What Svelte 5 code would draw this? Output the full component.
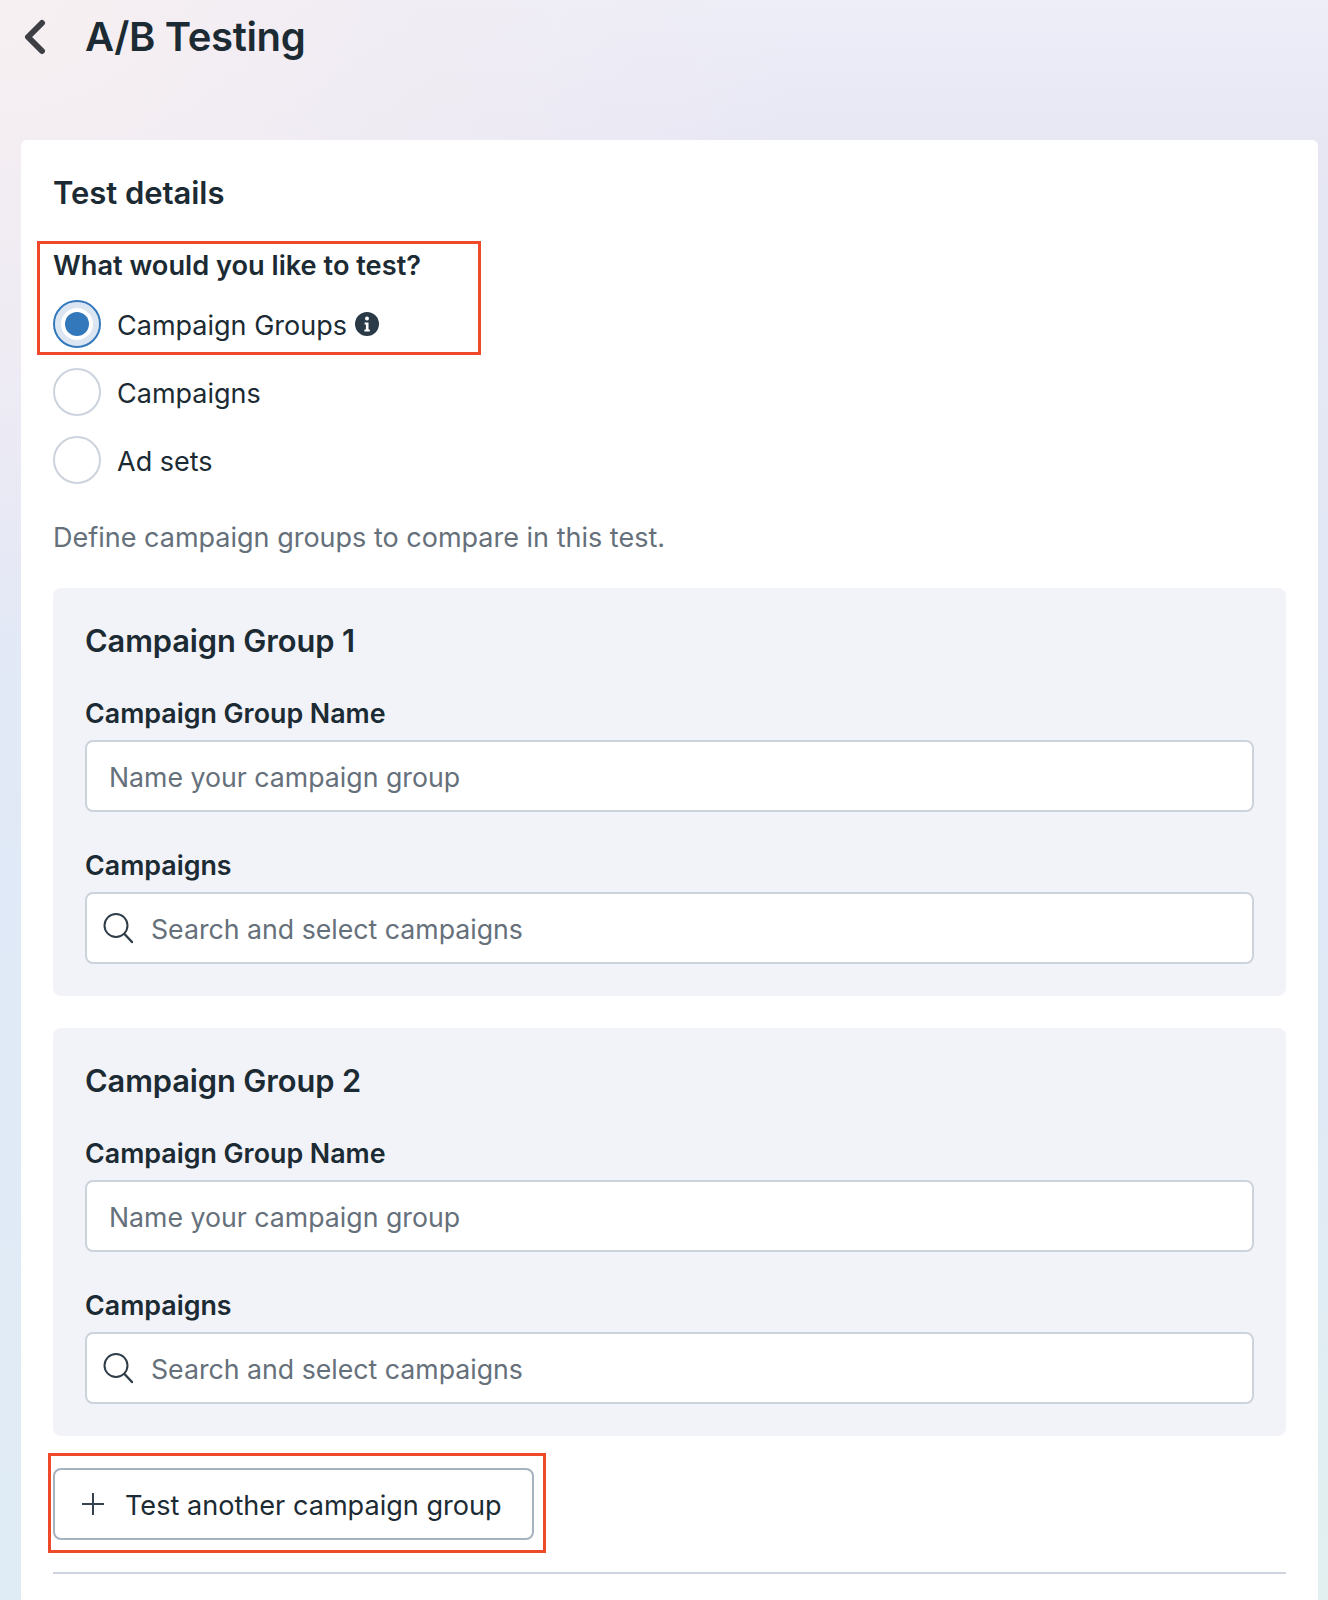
<script>
  const groups = [1, 2];
</script>

<div class="page">
  <header class="head">
    <svg class="back" width="24" height="36" viewBox="0 0 24 36" aria-hidden="true"><path d="M20 4 L6 18 L20 32" fill="none" stroke="#3d3f44" stroke-width="6" stroke-linecap="round" stroke-linejoin="round"/></svg>
    <h1>A/B Testing</h1>
  </header>
  <main class="card">
    <h2>Test details</h2>
    <div class="question">
      <div class="mark mark-q"></div>
      <div class="qlabel">What would you like to test?</div>
      <div class="radios">
        <div class="radio">
          <span class="dot on"><i></i></span>
          <span class="rtext">Campaign Groups</span>
          <svg class="info" width="24" height="24" viewBox="0 0 24 24" aria-hidden="true"><circle cx="12" cy="12" r="12" fill="#2a3a47"/><circle cx="12" cy="6.6" r="2" fill="#fff"/><path d="M9.6 10.4h3.9v7h1.3v2H9.4v-2h1.5v-5H9.6z" fill="#fff"/></svg>
        </div>
        <div class="radio"><span class="dot"></span><span class="rtext">Campaigns</span></div>
        <div class="radio"><span class="dot"></span><span class="rtext">Ad sets</span></div>
      </div>
    </div>
    <p class="hint">Define campaign groups to compare in this test.</p>
    <div class="panels">
      {#each groups as n}
        <section class="panel">
          <h3>Campaign Group {n}</h3>
          <label class="flabel" for="name{n}">Campaign Group Name</label>
          <div class="field"><input id="name{n}" placeholder="Name your campaign group" /></div>
          <label class="flabel second" for="search{n}">Campaigns</label>
          <div class="field search">
            <svg width="32" height="32" viewBox="0 0 32 32" aria-hidden="true"><circle cx="14" cy="13.5" r="11.5" fill="none" stroke="#2f3d49" stroke-width="2"/><path d="M22.5 22 L30 30" fill="none" stroke="#2f3d49" stroke-width="2.4" stroke-linecap="round"/></svg>
            <input id="search{n}" placeholder="Search and select campaigns" />
          </div>
        </section>
      {/each}
    </div>
    <div class="addrow">
      <div class="mark mark-b"></div>
      <button type="button">
        <svg width="24" height="24" viewBox="0 0 24 24" aria-hidden="true"><path d="M12 1v22M1 12h22" stroke="#35424e" stroke-width="2" fill="none"/></svg>
        <span class="btext">Test another campaign group</span>
      </button>
    </div>
    <hr />
  </main>
</div>

<style>
  :global(body) { margin: 0; }
  .page {
    height: 1600px;
    overflow: hidden;
    box-sizing: border-box;
    padding: 0 10px 0 21px;
    font-family: Inter, "Liberation Sans", sans-serif;
    color: #1c2b33;
    background:
      radial-gradient(500px 500px at 100% 100%, #e2f0f0 0%, rgba(226,240,240,0) 100%),
      radial-gradient(800px 650px at 0 0, #f7f0f2 0%, rgba(241,236,243,0.75) 55%, rgba(235,232,244,0) 100%),
      linear-gradient(180deg, #edeef8 0%, #e7e7f4 9%, #e0e9f7 55%, #e0ecf5 100%);
  }
  .head { height: 140px; display: flex; align-items: flex-start; padding-top: 19px; box-sizing: border-box; margin-left: 1px; }
  .back { flex: none; }
  h1 { margin: 0 0 0 39px; font-size: 40px; line-height: 36px; font-weight: 600; letter-spacing: -0.35px; }
  .card { background: #fff; border-radius: 6px; padding: 32px; height: 1600px; box-sizing: border-box; }
  h2 { margin: 0; font-size: 31px; line-height: 42px; font-weight: 600; letter-spacing: -0.05px; }
  .question { position: relative; margin-top: 36px; }
  .qlabel { font-size: 27.2px; line-height: 32px; font-weight: 600; }
  .radios { display: flex; flex-direction: column; gap: 20px; margin-top: 18px; }
  .radio { display: flex; align-items: center; height: 48px; font-size: 27px; }
  .rtext { padding-top: 2px; }
  .dot { flex: none; width: 48px; height: 48px; box-sizing: border-box; border: 2px solid #ccd3dd; border-radius: 50%; margin-right: 16px; display: flex; align-items: center; justify-content: center; }
  .dot.on { border-color: #3478bc; box-shadow: inset 0 0 0 6px #dbe6f2; }
  .dot.on i { width: 24px; height: 24px; border-radius: 50%; background: #3478bc; }
  .info { margin-left: 8px; }
  .mark { position: absolute; border: 3px solid #ee4a2a; box-sizing: border-box; pointer-events: none; }
  .mark-q { left: -16px; top: -9px; width: 444px; height: 114px; }
  .mark-b { left: -5px; top: -15px; width: 498px; height: 100px; }
  .hint { margin: 36px 0 0; font-size: 27px; line-height: 36px; color: #65707b; }
  .panels { display: flex; flex-direction: column; gap: 32px; margin-top: 32px; }
  .panel { background: #f2f3f8; border-radius: 8px; padding: 32px; }
  h3 { margin: 0; font-size: 30.8px; line-height: 42px; font-weight: 600; letter-spacing: -0.1px; }
  .flabel { display: block; margin-top: 33px; font-size: 26.8px; line-height: 36px; font-weight: 600; }
  .flabel.second { margin-top: 35px; }
  .field { margin-top: 9px; height: 72px; box-sizing: border-box; background: #fff; border: 2px solid #ccd3dd; border-radius: 8px; display: flex; align-items: center; padding: 0 22px; }
  .search { padding-left: 15px; gap: 17px; }
  .search svg { flex: none; margin-top: -1px; }
  input { flex: 1; min-width: 0; border: 0; outline: 0; padding: 1px 0 0; background: transparent; font: inherit; font-size: 26.7px; color: #1c2b33; }
  input::placeholder { color: #65707b; opacity: 1; }
  .addrow { position: relative; margin-top: 32px; }
  button { display: flex; align-items: center; gap: 20px; width: 481px; height: 72px; box-sizing: border-box; padding: 0 0 0 26px; background: #fff; border: 2px solid #a6b2bf; border-radius: 8px; font: inherit; font-size: 27.1px; color: #1c2b33; }
  .btext { padding-top: 3px; }
  hr { margin: 32px 0 0; border: 0; height: 2px; background: #ccd3dd; }
</style>
